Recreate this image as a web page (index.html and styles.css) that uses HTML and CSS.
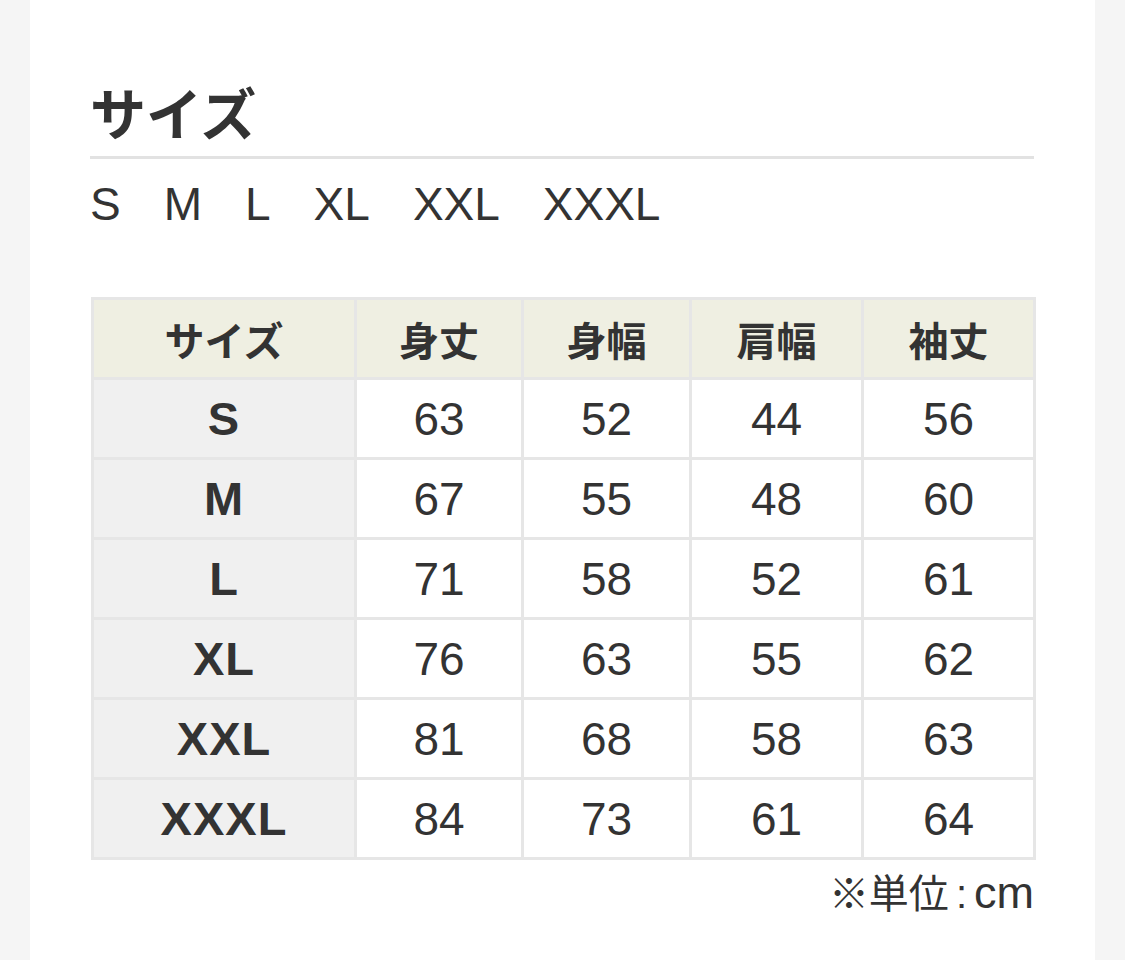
FILE: index.html
```html
<!DOCTYPE html>
<html lang="ja">
<head>
<meta charset="utf-8">
<link rel="stylesheet" href="styles.css">
</head>
<body>
<div class="page">
  <main class="card">
    <h2 class="title">サイズ</h2>
    <ul class="sizes">
      <li>S</li><li>M</li><li>L</li><li>XL</li><li>XXL</li><li>XXXL</li>
    </ul>
    <table class="chart">
      <colgroup>
        <col class="c1"><col class="c2"><col class="c3"><col class="c4"><col class="c5">
      </colgroup>
      <thead>
        <tr><th>サイズ</th><th>身丈</th><th>身幅</th><th>肩幅</th><th>袖丈</th></tr>
      </thead>
      <tbody>
        <tr><th>S</th><td>63</td><td>52</td><td>44</td><td>56</td></tr>
        <tr><th>M</th><td>67</td><td>55</td><td>48</td><td>60</td></tr>
        <tr><th>L</th><td>71</td><td>58</td><td>52</td><td>61</td></tr>
        <tr><th>XL</th><td>76</td><td>63</td><td>55</td><td>62</td></tr>
        <tr><th>XXL</th><td>81</td><td>68</td><td>58</td><td>63</td></tr>
        <tr><th>XXXL</th><td>84</td><td>73</td><td>61</td><td>64</td></tr>
      </tbody>
    </table>
    <p class="unit">※単位<span class="colon">:</span><span class="cm">cm</span></p>
  </main>
</div>
</body>
</html>
```
FILE: styles.css
```css
html, body {
  margin: 0;
  padding: 0;
  background: #f5f5f5;
}
body {
  font-family: "Liberation Sans", "Noto Sans CJK JP", sans-serif;
  color: #333;
}
.page {
  padding: 0 30px;
  height: 960px;
  overflow: hidden;
}
.card {
  background: #fff;
  height: 960px;
  padding: 76px 60px 0;
  box-sizing: border-box;
}
.title {
  margin: 0;
  font-size: 56px;
  font-weight: 700;
  line-height: 80px;
  border-bottom: 3px solid #e2e2e2;
  width: 944px;
}
.sizes {
  list-style: none;
  margin: 0;
  padding: 0;
  display: flex;
  gap: 43px;
  font-size: 46px;
  line-height: 90px;
  height: 138px;
}
.chart {
  border-collapse: collapse;
  width: 942px;
  margin-left: 1px;
  table-layout: fixed;
  text-align: center;
}
.c1 { width: 263px; }
.c2 { width: 167px; }
.c3 { width: 168px; }
.c4 { width: 172px; }
.c5 { width: 172px; }
.chart th, .chart td {
  border: 3px solid #e6e6e6;
  height: 80px;
  padding: 0;
  box-sizing: border-box;
}
.chart thead th {
  background: #efefe2;
  font-size: 40px;
  font-weight: 700;
}
.chart tbody th {
  background: #f0f0f0;
  font-size: 47px;
  font-weight: 700;
  letter-spacing: 1px;
}
.chart td {
  font-size: 46px;
  font-weight: 400;
}
.unit {
  margin: 8px 0 0;
  width: 944px;
  text-align: right;
  font-size: 40px;
  line-height: 50px;
}
.colon {
  padding: 0 7px;
}
.cm {
  font-size: 45px;
}
```
